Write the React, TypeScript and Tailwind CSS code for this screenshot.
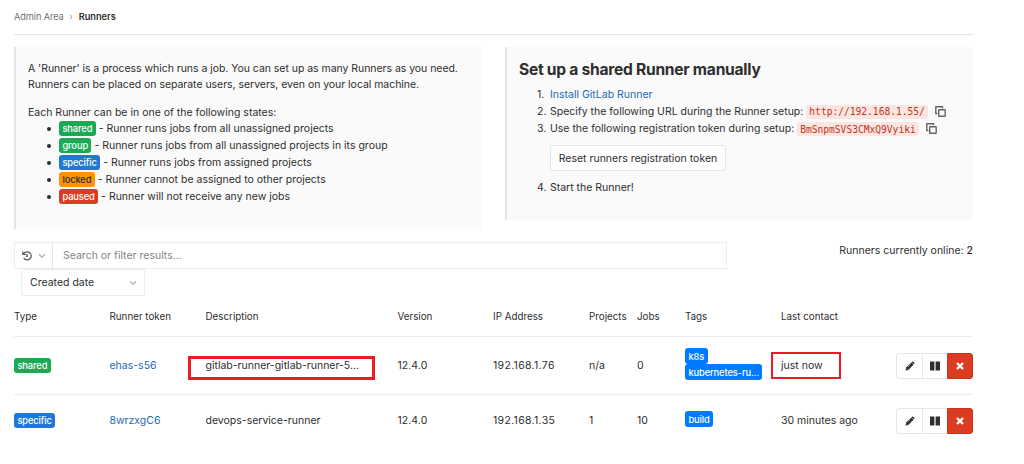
import type { ReactNode } from 'react';

const badgeTones = {
  green: 'bg-[#1aaa55] text-white',
  blue: 'bg-[#1f78d1] text-white',
  orange: 'bg-[#fc9403] text-[#2e2e2e]',
  red: 'bg-[#db3b21] text-white',
  tag: 'bg-[#007bff] text-white',
};

type Tone = keyof typeof badgeTones;

function Badge({ tone, children }: { tone: Tone; children: ReactNode }) {
  return (
    <span
      className={`inline-flex h-[15.5px] max-w-[79px] shrink-0 items-center rounded-[3px] px-[3.4px] pt-px text-[9.3px] leading-none font-medium tracking-[-0.1px] whitespace-nowrap ${badgeTones[tone]}`}
    >
      {children}
    </span>
  );
}

function Chevron() {
  return (
    <svg width="8" height="6" viewBox="0 0 8 6" fill="none" stroke="#b5b5b5" strokeWidth="1.3">
      <path d="M1 1.2 4 4.3 7 1.2" />
    </svg>
  );
}

function CopyIcon() {
  return (
    <svg className="-mt-px" width="11" height="11" viewBox="0 0 11 11" fill="none" stroke="#666" strokeWidth="1.4">
      <path d="M2.4 7.5H.8V.8h6.7v1.4" />
      <rect x="3.7" y="3.7" width="6.5" height="6.5" rx=".5" />
    </svg>
  );
}

function HistoryIcon() {
  return (
    <svg width="10" height="10" viewBox="0 0 10 10" fill="none" stroke="#555" strokeWidth="1.2">
      <path d="M1.3 3.1C2.2 1.6 3.6.9 5.2.9a4 4 0 1 1-3.5 6" />
      <path d="M.8.4v3.1h3.3M5.2 2.9v2.4H3.8" />
    </svg>
  );
}

function PencilIcon() {
  return (
    <svg width="10" height="10" viewBox="0 0 10 10" fill="#2e2e2e">
      <path d="M.5 9.5 1.1 6.6 5.9 1.9 8.1 4.1 3.4 8.9Z" />
      <path d="M6.5 1.3 7.2.7Q7.7.3 8.2.7L9.3 1.8Q9.7 2.3 9.3 2.8L8.7 3.5Z" />
      <path d="M6.2 1.6 8.4 3.8 7.8 4.4 5.6 2.2Z" />
      <path d="M1.5 7.3 2.7 8.5M2.7 6.2 5.6 3.3" stroke="#fff" strokeWidth=".4" />
    </svg>
  );
}

function PauseIcon() {
  return (
    <svg width="10" height="10" viewBox="0 0 10 10" fill="#2e2e2e">
      <rect y=".5" width="4.4" height="9" rx=".3" />
      <rect x="5.6" y=".5" width="4.4" height="9" rx=".3" />
    </svg>
  );
}

function TimesIcon() {
  return (
    <svg width="8" height="8" viewBox="0 0 8 8" stroke="#fff" strokeWidth="2.3">
      <path d="M1 1 7 7M7 1 1 7" />
    </svg>
  );
}

const states: { name: string; tone: Tone; text: string }[] = [
  { name: 'shared', tone: 'green', text: '- Runner runs jobs from all unassigned projects' },
  { name: 'group', tone: 'green', text: '- Runner runs jobs from all unassigned projects in its group' },
  { name: 'specific', tone: 'blue', text: '- Runner runs jobs from assigned projects' },
  { name: 'locked', tone: 'orange', text: '- Runner cannot be assigned to other projects' },
  { name: 'paused', tone: 'red', text: '- Runner will not receive any new jobs' },
];

const columns = 'grid grid-cols-[95.5px_96px_192px_95.5px_96px_48px_48px_96px_96px_96px] items-center';

interface Runner {
  type: string;
  tone: Tone;
  token: string;
  description: string;
  ip: string;
  projects: string;
  jobs: string;
  tags: string[];
  contact: string;
  marked?: boolean;
}

const runners: Runner[] = [
  {
    type: 'shared',
    tone: 'green',
    token: 'ehas-s56',
    description: 'gitlab-runner-gitlab-runner-5...',
    ip: '192.168.1.76',
    projects: 'n/a',
    jobs: '0',
    tags: ['k8s', 'kubernetes-ru...'],
    contact: 'just now',
    marked: true,
  },
  {
    type: 'specific',
    tone: 'blue',
    token: '8wrzxgC6',
    description: 'devops-service-runner',
    ip: '192.168.1.35',
    projects: '1',
    jobs: '10',
    tags: ['build'],
    contact: '30 minutes ago',
  },
];

function Actions() {
  return (
    <div className="ml-[19px] flex h-[26px] w-[77px]">
      <button className="flex w-[27px] items-center justify-center rounded-l-[3px] border border-[#e5e5e5] bg-white">
        <PencilIcon />
      </button>
      <button className="flex w-6 items-center justify-center border-y border-[#e5e5e5] bg-white">
        <PauseIcon />
      </button>
      <button className="flex w-[26px] items-center justify-center rounded-r-[3px] border border-[#c9341c] bg-[#db3b21]">
        <TimesIcon />
      </button>
    </div>
  );
}

function RunnerRow({ runner }: { runner: Runner }) {
  return (
    <div className={`${columns} ${runner.marked ? 'h-[58px] border-b border-[#ececec]' : 'h-[51px]'}`}>
      <div className="flex">
        <Badge tone={runner.tone}>{runner.type}</Badge>
      </div>
      <a className="pt-px text-[#1b69b6]">{runner.token}</a>
      <div className="relative pt-px">
        {runner.description}
        {runner.marked && (
          <span className="absolute -top-px -left-[17.5px] h-[24px] w-[187px] border-[3px] border-[#ed1c24]" />
        )}
      </div>
      <div className="pt-px tracking-[0.05px]">12.4.0</div>
      <div className="pt-px tracking-[0.32px]">{runner.ip}</div>
      <div className="pt-px">{runner.projects}</div>
      <div className="pt-px">{runner.jobs}</div>
      <div className="-mt-[3px] flex flex-col items-start gap-[0.5px]">
        {runner.tags.map((tag) => (
          <Badge key={tag} tone="tag">
            {tag}
          </Badge>
        ))}
      </div>
      <div className="relative pt-px">
        {runner.contact}
        {runner.marked && (
          <span className="absolute -top-[5px] -left-[10px] h-[27px] w-[70px] border-2 border-[#ed1c24]" />
        )}
      </div>
      <Actions />
    </div>
  );
}

function Code({ children }: { children: ReactNode }) {
  return (
    <code className="mr-[7px] ml-[3px] inline-flex h-[14px] items-center rounded-[3px] bg-[#fbe5e1] px-[3px] pt-px font-['DejaVu_Sans_Mono',monospace] text-[9.6px] leading-none tracking-normal text-[#c0341d]">
      {children}
    </code>
  );
}

export default function App() {
  return (
    <div className="h-[464px] w-[1024px] overflow-hidden bg-white pr-[51px] pl-[14px] font-['Inter',sans-serif] text-[10.5px] leading-4 whitespace-nowrap text-[#2e2e2e]">
      <nav className="flex h-[35px] items-center border-b border-[#e5e5e5] pb-[1px] text-[9.2px]">
        <span className="tracking-[-0.08px] text-[#707070]">Admin Area</span>
        <svg className="mx-[5px]" width="5" height="6" viewBox="0 0 5 6" fill="none" stroke="#999">
          <path d="m1 .8 2.2 2.2L1 5.2" />
        </svg>
        <span className="font-semibold">Runners</span>
      </nav>

      <section className="mt-3 flex h-[182px] items-start justify-between">
        <div className="h-[182px] w-[468px] border-l-2 border-[#e5e5e5] bg-[#fafafa] pt-[14px] pl-3">
          <p className="tracking-[-0.04px]">
            A 'Runner' is a process which runs a job. You can set up as many Runners as you need.
            <br />
            Runners can be placed on separate users, servers, even on your local machine.
          </p>
          <p className="mt-3 -mb-px">Each Runner can be in one of the following states:</p>
          <ul>
            {states.map((s) => (
              <li key={s.name} className="flex h-[17px] items-center pl-[19px]">
                <span className="mr-2 size-1 rounded-full bg-[#2e2e2e]" />
                <Badge tone={s.tone}>{s.name}</Badge>
                <span className="ml-[3px]">{s.text}</span>
              </li>
            ))}
          </ul>
        </div>

        <div className="h-[173px] w-[468px] border-l-2 border-[#e5e5e5] bg-[#fafafa] pt-[13px] pl-3">
          <h4 className="text-[15.6px] leading-5 font-bold tracking-[-0.26px]">Set up a shared Runner manually</h4>
          <ol className="mt-[7px] pl-[18px]">
            <li className="flex h-4 items-center">
              <span className="w-[13px]">1.</span>
              <a className="text-[#1b69b6]">Install GitLab Runner</a>
            </li>
            <li className="flex h-[17px] items-center">
              <span className="w-[13px]">2.</span>Specify the following URL during the Runner setup:
              <Code>http://192.168.1.55/</Code>
              <CopyIcon />
            </li>
            <li className="flex h-[18px] items-center">
              <span className="w-[13px]">3.</span>Use the following registration token during setup:
              <Code>BmSnpmSVS3CMxQ9Vyiki</Code>
              <CopyIcon />
            </li>
            <li className="mt-[7px] ml-[13px] flex">
              <button className="h-[26px] w-[176px] rounded-[3px] border border-[#e5e5e5] bg-white pt-px">
                Reset runners registration token
              </button>
            </li>
            <li className="mt-[9px] flex h-4 items-center">
              <span className="w-[13px]">4.</span>Start the Runner!
            </li>
          </ol>
        </div>
      </section>

      <section className="mt-[13px] flex items-start justify-between">
        <div>
          <div className="flex h-[27px] w-[713px] border border-[#ececec]">
            <div className="flex w-[38px] items-center justify-center gap-[6px] border-r border-[#e5e5e5]">
              <HistoryIcon />
              <Chevron />
            </div>
            <div className="flex items-center pt-px pl-[10px] text-[#868686]">Search or filter results...</div>
          </div>
          <div className="ml-[7px] flex h-[27px] w-[124px] items-center justify-between rounded-[2px] border border-[#ececec] pr-[7px] pl-2">
            <span className="pt-px">Created date</span>
            <Chevron />
          </div>
        </div>
        <div className="pt-px">
          Runners currently online: <span className="font-medium">2</span>
        </div>
      </section>

      <section>
        <div className={`${columns} h-[41px] border-b border-[#ececec] pt-[2px] text-[9.8px]`}>
          {['Type', 'Runner token', 'Description', 'Version', 'IP Address', 'Projects', 'Jobs', 'Tags', 'Last contact'].map(
            (label) => (
              <div key={label}>{label}</div>
            ),
          )}
        </div>
        {runners.map((r) => (
          <RunnerRow key={r.token} runner={r} />
        ))}
      </section>
    </div>
  );
}
